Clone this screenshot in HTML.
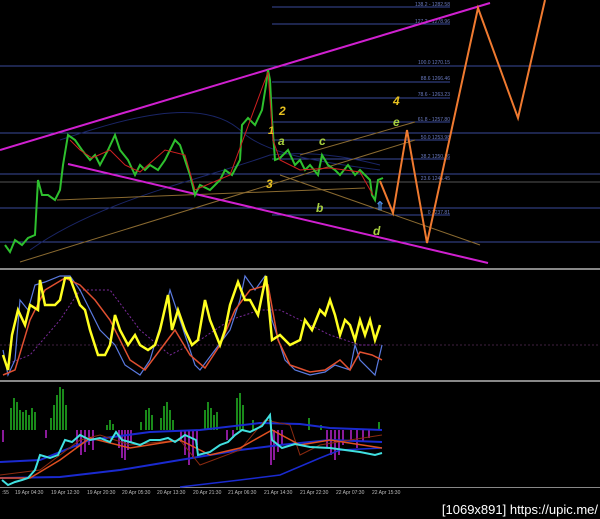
<!DOCTYPE html>
<html><head><meta charset="utf-8"><style>
html,body{margin:0;padding:0;background:#000;width:600px;height:519px;overflow:hidden}
svg{display:block}
text{font-family:"Liberation Sans",sans-serif}
</style></head><body>
<svg width="600" height="519" viewBox="0 0 600 519" xmlns="http://www.w3.org/2000/svg">
<rect width="600" height="519" fill="#000"/>
<!-- long horizontal lines -->
<g stroke="#3a4a9a" stroke-width="1">
<line x1="0" y1="66" x2="600" y2="66"/>
<line x1="0" y1="133" x2="600" y2="133"/>
<line x1="0" y1="174" x2="600" y2="174"/>
<line x1="0" y1="208" x2="600" y2="208"/>
<line x1="0" y1="242" x2="600" y2="242"/>
</g>
<line x1="0" y1="182" x2="600" y2="182" stroke="#555" stroke-width="1"/>
<!-- fib short lines -->
<g stroke="#3a4a9a" stroke-width="1">
<line x1="272" y1="7" x2="450" y2="7"/><line x1="272" y1="24" x2="450" y2="24"/>
<line x1="272" y1="82" x2="450" y2="82"/><line x1="272" y1="98" x2="450" y2="98"/>
<line x1="272" y1="122" x2="450" y2="122"/><line x1="272" y1="140" x2="450" y2="140"/>
<line x1="272" y1="159" x2="450" y2="159"/><line x1="272" y1="215" x2="450" y2="215"/>
</g>
<g fill="#6a7ac0" font-size="5" text-anchor="end">
<text x="450" y="6">138.2 - 1282.58</text><text x="450" y="23">127.2 - 1278.96</text>
<text x="450" y="64">100.0 1270.15</text><text x="450" y="80">88.6 1266.46</text>
<text x="450" y="96">78.6 - 1263.23</text><text x="450" y="121">61.8 - 1257.80</text>
<text x="450" y="139">50.0 1253.98</text><text x="450" y="158">38.2 1250.16</text>
<text x="450" y="180">23.6 1245.45</text><text x="450" y="214">0 1237.81</text>
</g>
<!-- faint bands -->
<path d="M60,140 C120,120 200,95 240,130 C260,150 300,160 380,170" stroke="#1a2566" fill="none"/>
<path d="M30,250 C100,200 200,180 270,155 C320,150 360,160 380,165" stroke="#1a2566" fill="none"/>
<!-- tan lines -->
<g stroke="#8a6a30" stroke-width="1" fill="none">
<line x1="20" y1="262" x2="415" y2="140"/>
<line x1="57" y1="200" x2="365" y2="188"/>
<line x1="280" y1="175" x2="480" y2="245"/>
<line x1="300" y1="155" x2="415" y2="122"/>
</g>
<!-- magenta channel -->
<line x1="0" y1="150" x2="490" y2="3" stroke="#d020d0" stroke-width="2"/>
<line x1="68" y1="164" x2="488" y2="263" stroke="#d020d0" stroke-width="2"/>
<!-- price -->
<polyline fill="none" stroke="#2ec02e" stroke-width="2" points="5,245 10,252 15,240 22,245 28,238 35,235 38,180 42,195 48,195 55,200 60,190 63,165 68,135 75,140 82,150 90,160 95,155 100,165 108,150 115,135 120,150 128,160 135,175 140,165 145,170 150,165 158,170 165,160 170,150 175,140 180,145 185,160 190,175 195,195 200,185 210,190 220,180 225,170 232,175 240,160 242,125 248,118 255,125 262,110 266,85 268,70 270,80 272,120 275,160 280,158 288,150 295,165 300,160 305,170 310,165 318,175 322,155 328,165 335,170 340,175 348,165 355,175 360,170 365,175 370,180 372,195 375,200 378,180 383,178"/>
<polyline fill="none" stroke="#d02020" stroke-width="1" points="70,140 80,150 92,158 110,150 125,165 140,172 165,150 185,155 195,190 230,175 268,72 273,140 280,160 300,170 330,168 360,172 373,195"/>
<text x="375" y="210" fill="#4a8adf" font-size="12" font-weight="bold">⇑</text>
<!-- labels -->
<g font-style="italic" font-weight="bold" font-size="12">
<text x="279" y="115" fill="#e6c020">2</text><text x="268" y="134" fill="#e6c020" font-size="11">1</text>
<text x="266" y="188" fill="#e6c020">3</text><text x="393" y="105" fill="#e6c020">4</text>
<text x="278" y="145" fill="#a8d040">a</text><text x="316" y="212" fill="#a8d040">b</text>
<text x="319" y="145" fill="#a8d040">c</text><text x="373" y="235" fill="#a8d040">d</text>
<text x="393" y="126" fill="#a8d040">e</text>
</g>
<!-- orange zigzag -->
<polyline fill="none" stroke="#f07a30" stroke-width="2" points="380,181 393,213 407,130 427,243 478,8 518,118 545,0"/>
<!-- separators -->
<rect x="0" y="268" width="600" height="2" fill="#888"/>
<rect x="0" y="380" width="600" height="2" fill="#888"/>
<rect x="0" y="487" width="600" height="1" fill="#888"/>
<!-- stochastic panel -->
<line x1="0" y1="345" x2="600" y2="345" stroke="#402040" stroke-dasharray="2,2"/>
<polyline fill="none" stroke="#7a2a9a" stroke-dasharray="2,2" points="5,365 30,355 60,320 80,290 110,290 140,330 170,355 200,340 230,320 260,310 280,310 300,320 330,335 360,345 380,345"/>
<polyline fill="none" stroke="#5a7ae0" stroke-width="1.2" points="3,350 8,375 15,360 20,300 28,310 35,285 45,282 60,276 70,276 80,290 90,310 100,330 115,345 125,365 140,375 150,360 165,310 170,290 180,320 195,365 200,370 215,350 230,330 240,300 245,276 255,290 265,276 272,320 285,360 295,370 310,375 325,372 335,365 350,370 355,345 360,360 375,375 382,345"/>
<polyline fill="none" stroke="#e05030" stroke-width="1.5" points="3,375 15,370 30,320 45,290 65,278 80,285 95,300 110,320 130,360 145,370 160,350 175,330 190,355 205,368 220,345 235,310 250,290 268,285 278,340 290,365 310,372 325,370 340,360 350,370 360,352 372,355 382,360"/>
<polyline fill="none" stroke="#ffff20" stroke-width="2.5" points="3,355 8,370 12,335 18,310 25,325 30,305 38,310 40,280 45,305 55,305 60,300 65,278 70,278 80,305 85,310 90,330 98,355 105,355 110,345 115,315 120,330 128,345 135,335 140,345 148,350 155,345 160,330 168,295 172,330 178,310 185,330 192,345 198,340 205,300 210,320 220,345 225,330 230,305 238,282 245,300 250,300 258,315 266,276 272,340 280,335 290,345 300,340 305,320 312,330 320,310 325,315 330,300 335,315 340,335 345,320 350,325 355,340 360,320 365,335 370,320 375,340 380,325"/>
<!-- MACD panel -->
<g fill="#1a8a1a">
<rect x="10" y="408" width="2" height="22"/><rect x="13" y="398" width="2" height="32"/><rect x="16" y="402" width="2" height="28"/><rect x="19" y="410" width="2" height="20"/><rect x="22" y="412" width="2" height="18"/><rect x="25" y="410" width="2" height="20"/><rect x="28" y="415" width="2" height="15"/><rect x="31" y="408" width="2" height="22"/><rect x="34" y="412" width="2" height="18"/>
<rect x="50" y="418" width="2" height="12"/><rect x="53" y="405" width="2" height="25"/><rect x="56" y="395" width="2" height="35"/><rect x="59" y="387" width="2" height="43"/><rect x="62" y="389" width="2" height="41"/><rect x="65" y="405" width="2" height="25"/>
<rect x="106" y="425" width="2" height="5"/><rect x="109" y="420" width="2" height="10"/><rect x="112" y="424" width="2" height="6"/>
<rect x="140" y="422" width="2" height="8"/><rect x="145" y="410" width="2" height="20"/><rect x="148" y="408" width="2" height="22"/><rect x="151" y="415" width="2" height="15"/>
<rect x="160" y="418" width="2" height="12"/><rect x="163" y="406" width="2" height="24"/><rect x="166" y="402" width="2" height="28"/><rect x="169" y="410" width="2" height="20"/><rect x="172" y="420" width="2" height="10"/>
<rect x="204" y="410" width="2" height="20"/><rect x="207" y="402" width="2" height="28"/><rect x="210" y="408" width="2" height="22"/><rect x="213" y="415" width="2" height="15"/><rect x="216" y="412" width="2" height="18"/>
<rect x="236" y="398" width="2" height="32"/><rect x="239" y="393" width="2" height="37"/><rect x="242" y="405" width="2" height="25"/>
<rect x="252" y="420" width="2" height="10"/><rect x="270" y="420" width="2" height="10"/><rect x="308" y="418" width="2" height="12"/><rect x="320" y="425" width="2" height="5"/><rect x="378" y="422" width="2" height="8"/>
</g>
<g fill="#8a1a9a">
<rect x="2" y="430" width="2" height="12"/><rect x="45" y="430" width="2" height="8"/>
<rect x="76" y="430" width="2" height="18"/><rect x="80" y="430" width="2" height="25"/><rect x="84" y="430" width="2" height="22"/><rect x="88" y="430" width="2" height="15"/><rect x="92" y="430" width="2" height="20"/>
<rect x="118" y="430" width="2" height="18"/><rect x="121" y="430" width="2" height="28"/><rect x="124" y="430" width="2" height="30"/><rect x="127" y="430" width="2" height="20"/><rect x="130" y="430" width="2" height="12"/>
<rect x="180" y="430" width="2" height="12"/><rect x="184" y="430" width="2" height="25"/><rect x="188" y="430" width="2" height="35"/><rect x="192" y="430" width="2" height="28"/><rect x="196" y="430" width="2" height="15"/>
<rect x="226" y="430" width="2" height="10"/><rect x="232" y="430" width="2" height="8"/>
<rect x="270" y="430" width="2" height="35"/><rect x="273" y="430" width="2" height="30"/><rect x="277" y="430" width="2" height="22"/><rect x="281" y="430" width="2" height="15"/>
<rect x="326" y="430" width="2" height="18"/><rect x="330" y="430" width="2" height="25"/><rect x="334" y="430" width="2" height="30"/><rect x="338" y="430" width="2" height="25"/><rect x="342" y="430" width="2" height="15"/><rect x="350" y="430" width="2" height="10"/><rect x="356" y="430" width="2" height="18"/><rect x="362" y="430" width="2" height="12"/><rect x="368" y="430" width="2" height="8"/>
</g>
<polyline fill="none" stroke="#1a2ad0" stroke-width="2" points="0,462 40,460 90,440 150,432 200,430 260,423 300,424 330,428 382,430"/>
<polyline fill="none" stroke="#1a2ad0" stroke-width="2" points="0,478 60,477 120,470 180,460 240,450 280,445 330,440 382,442"/>
<polyline fill="none" stroke="#1a2ad0" stroke-width="1.5" points="180,487 240,480 280,475 320,458 340,450 382,448"/>
<polyline fill="none" stroke="#8a2a10" stroke-width="1" points="0,475 40,470 80,440 100,435 130,445 180,440 200,465 240,450 265,420 290,425 300,455 320,445 350,440 382,435"/>
<polyline fill="none" stroke="#e05020" stroke-width="1.5" points="0,478 30,478 60,460 90,438 130,448 180,440 210,455 240,448 272,430 300,445 330,440 382,448"/>
<polyline fill="none" stroke="#40e0e0" stroke-width="2" points="2,480 8,485 15,482 22,480 28,478 35,470 40,455 50,458 58,455 65,440 72,442 80,435 90,440 100,438 110,442 116,432 122,440 130,442 140,445 150,440 160,440 168,438 175,442 185,435 196,440 198,455 210,452 220,445 228,442 235,435 242,430 250,432 262,426 270,415 272,440 282,448 295,444 310,447 330,448 345,450 360,452 375,455 382,453"/>
<g fill="#bbb" font-size="5">
<text x="2" y="494">:55</text><text x="15" y="494">19 Apr 04:30</text><text x="51" y="494">19 Apr 12:30</text><text x="87" y="494">19 Apr 20:30</text><text x="122" y="494">20 Apr 05:30</text><text x="157" y="494">20 Apr 13:30</text><text x="193" y="494">20 Apr 21:30</text><text x="228" y="494">21 Apr 06:30</text><text x="264" y="494">21 Apr 14:30</text><text x="300" y="494">21 Apr 22:30</text><text x="336" y="494">22 Apr 07:30</text><text x="372" y="494">22 Apr 15:30</text>
</g>
<text x="598" y="514" fill="#fff" font-size="13" text-anchor="end">[1069x891] https://upic.me/</text>
</svg>
</body></html>
